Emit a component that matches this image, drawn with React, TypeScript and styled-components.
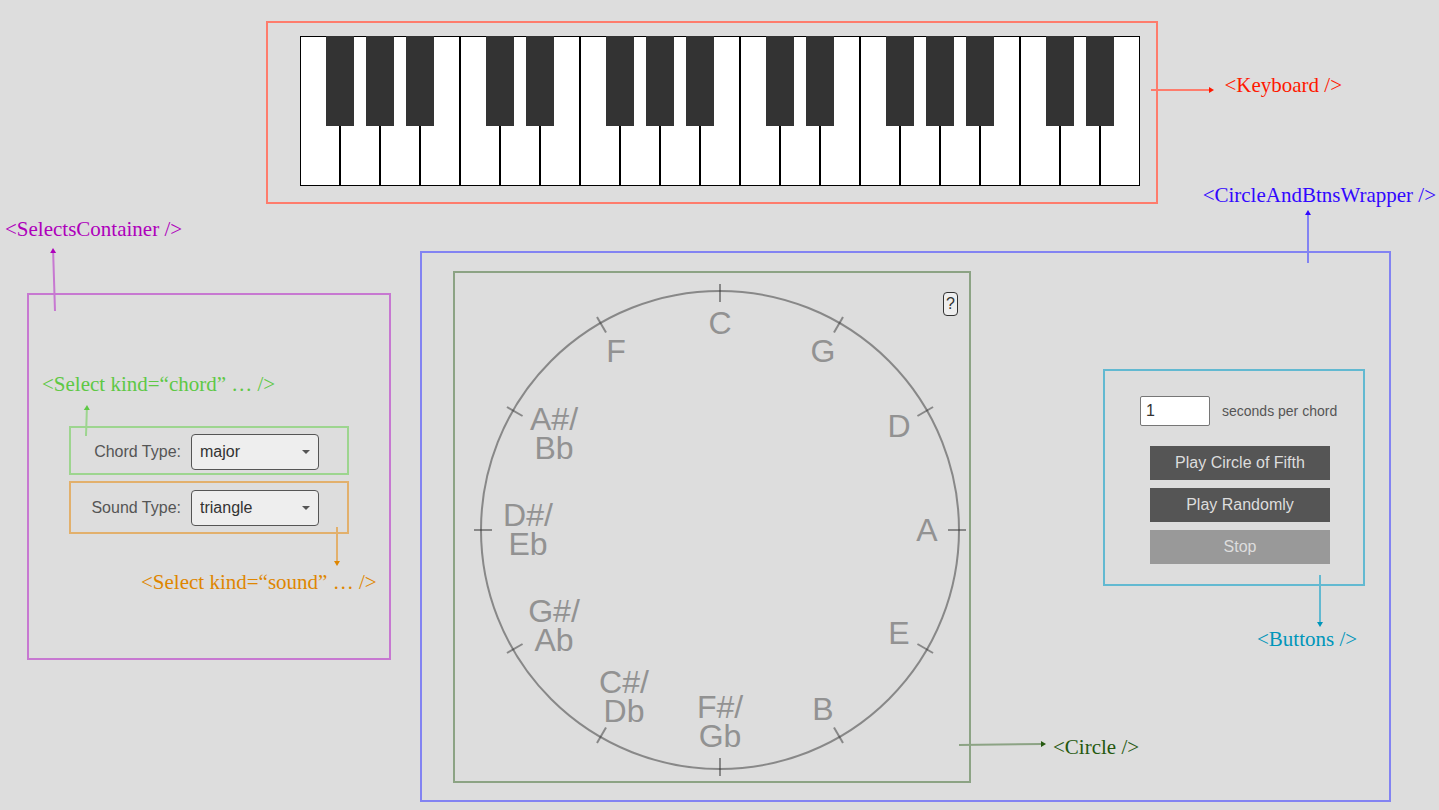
import React from 'react';
import styled, { createGlobalStyle } from 'styled-components';

const GlobalStyle = createGlobalStyle`
  *, *::before, *::after { box-sizing: border-box; }
  body {
    margin: 0;
    background: #ddd;
    color: #555;
    font-family: Arial, "Liberation Sans", sans-serif;
    font-size: 16px;
  }
`;

const tones = {
  red: { line: '#fe7c6c', text: '#ff1800' },
  purple: { line: '#c778d1', text: '#ae00bb' },
  green: { line: '#9dd58f', text: '#5ec845' },
  orange: { line: '#e2b06c', text: '#df8600' },
  blue: { line: '#8283f2', text: '#3208ff' },
  forest: { line: '#8ca384', text: '#25590f' },
  teal: { line: '#62b9d1', text: '#0096ba' },
};
type Tone = keyof typeof tones;

/* ---------- Layout ---------- */

const Page = styled.div`
  min-height: 100vh;
  padding: 21px 0 8px;
  display: flex;
  flex-direction: column;
  gap: 47px;
  overflow-x: hidden;
`;

const Header = styled.header`
  display: flex;
  justify-content: center;
  padding-right: 15px;
`;

const Main = styled.main`
  display: flex;
  align-items: flex-start;
  gap: 29px;
  padding: 0 48px 0 27px;
`;

const Frame = styled.section<{ $tone: Tone }>`
  position: relative;
  border: 2px solid ${(p) => tones[p.$tone].line};
`;

/* ---------- Annotations ---------- */

interface Spot {
  top: number;
  left?: number;
  right?: number;
}

const place = (p: { $at: Spot }) => `
  position: absolute;
  top: ${p.$at.top}px;
  ${p.$at.left !== undefined ? `left: ${p.$at.left}px;` : ''}
  ${p.$at.right !== undefined ? `right: ${p.$at.right}px;` : ''}
`;

const Tag = styled.span<{ $tone: Tone; $at: Spot }>`
  ${place}
  color: ${(p) => tones[p.$tone].text};
  font-family: "Times New Roman", "Liberation Serif", serif;
  font-size: 21px;
  line-height: 24px;
  white-space: nowrap;
  pointer-events: none;
`;

const ArrowSvg = styled.svg<{ $at: Spot }>`
  ${place}
  overflow: visible;
  pointer-events: none;
`;

/* The arrow runs from the origin of its box to (dx, dy). */
function Arrow({ tone, at, dx, dy }: { tone: Tone; at: Spot; dx: number; dy: number }) {
  const length = Math.hypot(dx, dy);
  const angle = (Math.atan2(dy, dx) * 180) / Math.PI;
  return (
    <ArrowSvg $at={at} width="1" height="1" aria-hidden="true">
      <g transform={`rotate(${angle})`}>
        <line x2={length - 4} stroke={tones[tone].line} strokeWidth="2" />
        <path d={`M${length} 0l-5 -3v6z`} fill={tones[tone].text} />
      </g>
    </ArrowSvg>
  );
}

/* ---------- Keyboard ---------- */

const KeyboardFrame = styled(Frame)`
  padding: 13px 16px 16px 32px;
`;

const Keys = styled.div`
  display: flex;
  height: 150px;
`;

const KeySlot = styled.div`
  position: relative;
  width: 40px;
`;

const WhiteKey = styled.button`
  display: block;
  width: 100%;
  height: 100%;
  padding: 0;
  border: 1px solid #000;
  background: #fff;
`;

const BlackKey = styled.button`
  position: absolute;
  z-index: 1;
  top: 0;
  right: -14px;
  width: 28px;
  height: 90px;
  padding: 0;
  border: 0;
  background: #333;
`;

const whiteNotes = 'FGABCDE'.repeat(3).split('');
const hasSharp = (note: string) => !'EB'.includes(note);

function Keyboard() {
  return (
    <KeyboardFrame $tone="red">
      <Keys>
        {whiteNotes.map((note, i) => (
          <KeySlot key={i}>
            <WhiteKey type="button" aria-label={note} />
            {hasSharp(note) && <BlackKey type="button" aria-label={`${note} sharp`} />}
          </KeySlot>
        ))}
      </Keys>
      <Arrow tone="red" at={{ top: 67, right: 4 }} dx={63} dy={0} />
      <Tag $tone="red" $at={{ top: 50, right: -186 }}>{'<Keyboard />'}</Tag>
    </KeyboardFrame>
  );
}

/* ---------- Selects ---------- */

const SelectsFrame = styled(Frame)`
  flex: 0 0 364px;
  margin-top: 42px;
  padding: 131px 40px 124px;
  display: flex;
  flex-direction: column;
  gap: 6px;
`;

const SelectRow = styled(Frame)<{ $padding: string }>`
  display: flex;
  align-items: center;
  justify-content: flex-end;
  gap: 10px;
  padding: ${(p) => p.$padding};
  white-space: nowrap;
`;

const SelectBox = styled.div`
  position: relative;
  flex: none;
  width: 128px;
  height: 36px;
`;

const NativeSelect = styled.select`
  appearance: none;
  width: 100%;
  height: 100%;
  padding: 0 24px 2px 8px;
  border: 1px solid #555;
  border-radius: 4px;
  background: #eee;
  color: #333;
  font: inherit;
`;

const Caret = styled.svg`
  position: absolute;
  top: 16px;
  right: 9px;
  pointer-events: none;
`;

interface SelectProps {
  kind: string;
  label: string;
  options: string[];
  tone: Tone;
  padding: string;
  children: React.ReactNode;
}

function Select({ kind, label, options, tone, padding, children }: SelectProps) {
  return (
    <SelectRow $tone={tone} $padding={padding}>
      <label htmlFor={kind}>{label}</label>
      <SelectBox>
        <NativeSelect id={kind} defaultValue={options[0]}>
          {options.map((o) => (
            <option key={o}>{o}</option>
          ))}
        </NativeSelect>
        <Caret width="8" height="4" viewBox="0 0 8 4" aria-hidden="true">
          <path d="M0 0h8L4 4z" fill="#555" />
        </Caret>
      </SelectBox>
      {children}
    </SelectRow>
  );
}

function SelectsContainer() {
  return (
    <SelectsFrame $tone="purple">
      <Select
        kind="chord"
        label="Chord Type:"
        options={['major', 'minor']}
        tone="green"
        padding="6px 28px 3px 8px"
      >
        <Arrow tone="green" at={{ top: 8, left: 15 }} dx={1} dy={-31} />
        <Tag $tone="green" $at={{ top: -56, left: -29 }}>{'<Select kind=“chord” … />'}</Tag>
      </Select>
      <Select
        kind="sound"
        label="Sound Type:"
        options={['triangle', 'sine', 'square']}
        tone="orange"
        padding="7px 28px 6px 8px"
      >
        <Arrow tone="orange" at={{ top: 44, left: 266 }} dx={0} dy={39} />
        <Tag $tone="orange" $at={{ top: 87, left: 70 }}>{'<Select kind=“sound” … />'}</Tag>
      </Select>
      <Arrow tone="purple" at={{ top: 16, left: 26 }} dx={-2} dy={-63} />
      <Tag $tone="purple" $at={{ top: -78, left: -24 }}>{'<SelectsContainer />'}</Tag>
    </SelectsFrame>
  );
}

/* ---------- Circle of fifths ---------- */

const CircleFrame = styled(Frame)`
  flex: none;
  padding: 11px 3px 5px 19px;
`;

const Dial = styled.svg`
  display: block;
  font-size: 32px;
`;

const HelpButton = styled.button`
  position: absolute;
  top: 19px;
  right: 11px;
  width: 15px;
  height: 24px;
  padding: 0;
  border: 1px solid #333;
  border-radius: 4px;
  background: #eee;
  color: #333;
  font: inherit;
  line-height: 20px;
`;

/* Note names clockwise from the top, with the first baseline of each. */
const notes: { lines: string[]; x: number; y: number }[] = [
  { lines: ['C'], x: 246, y: 50 },
  { lines: ['G'], x: 349, y: 78 },
  { lines: ['D'], x: 425, y: 153 },
  { lines: ['A'], x: 453, y: 257 },
  { lines: ['E'], x: 425, y: 360 },
  { lines: ['B'], x: 349, y: 436 },
  { lines: ['F#/', 'Gb'], x: 246, y: 434 },
  { lines: ['C#/', 'Db'], x: 150, y: 409 },
  { lines: ['G#/', 'Ab'], x: 80, y: 338 },
  { lines: ['D#/', 'Eb'], x: 54, y: 242 },
  { lines: ['A#/', 'Bb'], x: 80, y: 146 },
  { lines: ['F'], x: 142, y: 78 },
];

function Circle() {
  return (
    <CircleFrame $tone="forest">
      <Dial width="492" height="492" viewBox="0 0 492 492" role="img" aria-label="Circle of fifths">
        <circle cx="246" cy="246" r="239" fill="none" stroke="#333" strokeOpacity="0.5" strokeWidth="2" />
        {notes.map(({ lines, x, y }, i) => (
          <g key={lines[0]}>
            <line
              x1="246"
              x2="246"
              y1="0"
              y2="18"
              stroke="#333"
              strokeOpacity="0.5"
              strokeWidth="2"
              transform={`rotate(${i * 30} 246 246)`}
            />
            <text y={y} textAnchor="middle" fill="#929292">
              {lines.map((line, n) => (
                <tspan key={line} x={x} dy={n * 29}>
                  {line}
                </tspan>
              ))}
            </text>
          </g>
        ))}
      </Dial>
      <HelpButton type="button">?</HelpButton>
      <Arrow tone="forest" at={{ top: 472, left: 504 }} dx={87} dy={-1} />
      <Tag $tone="forest" $at={{ top: 462, left: 598 }}>{'<Circle />'}</Tag>
    </CircleFrame>
  );
}

/* ---------- Buttons ---------- */

const ButtonsFrame = styled(Frame)`
  flex: none;
  margin-top: 98px;
  padding: 25px 23px 20px 35px;
`;

const Controls = styled.div`
  display: flex;
  flex-direction: column;
  align-items: center;
  gap: 8px;
  width: 200px;
`;

const Tempo = styled.label`
  display: flex;
  align-items: center;
  gap: 12px;
  width: 100%;
  margin-bottom: 12px;
  font-size: 14px;
  white-space: nowrap;
`;

const TempoInput = styled.input`
  appearance: textfield;
  width: 70px;
  height: 30px;
  padding: 0 5px;
  border: 1px solid #767676;
  border-radius: 2px;
  background: #fff;
  color: #333;
  font-family: inherit;
  font-size: 16px;
`;

const PlayButton = styled.button`
  width: 180px;
  height: 34px;
  padding: 0;
  border: 0;
  background: #555;
  color: #ddd;
  font: inherit;

  &:disabled {
    background: #999;
  }
`;

function Buttons() {
  return (
    <ButtonsFrame $tone="teal">
      <Controls>
        <Tempo>
          <TempoInput type="number" defaultValue={1} min={1} />
          seconds per chord
        </Tempo>
        <PlayButton type="button">Play Circle of Fifth</PlayButton>
        <PlayButton type="button">Play Randomly</PlayButton>
        <PlayButton type="button" disabled>
          Stop
        </PlayButton>
      </Controls>
      <Arrow tone="teal" at={{ top: 204, left: 215 }} dx={0} dy={52} />
      <Tag $tone="teal" $at={{ top: 256, left: 152 }}>{'<Buttons />'}</Tag>
    </ButtonsFrame>
  );
}

const WrapperFrame = styled(Frame)`
  flex: 1;
  display: flex;
  align-items: flex-start;
  justify-content: space-between;
  gap: 24px;
  padding: 18px 24px 17px 31px;
`;

function CircleAndBtnsWrapper() {
  return (
    <WrapperFrame $tone="blue">
      <Circle />
      <Buttons />
      <Arrow tone="blue" at={{ top: 10, right: 80 }} dx={0} dy={-53} />
      <Tag $tone="blue" $at={{ top: -70, right: -47 }}>{'<CircleAndBtnsWrapper />'}</Tag>
    </WrapperFrame>
  );
}

export default function App() {
  return (
    <>
      <GlobalStyle />
      <Page>
        <Header>
          <Keyboard />
        </Header>
        <Main>
          <SelectsContainer />
          <CircleAndBtnsWrapper />
        </Main>
      </Page>
    </>
  );
}
